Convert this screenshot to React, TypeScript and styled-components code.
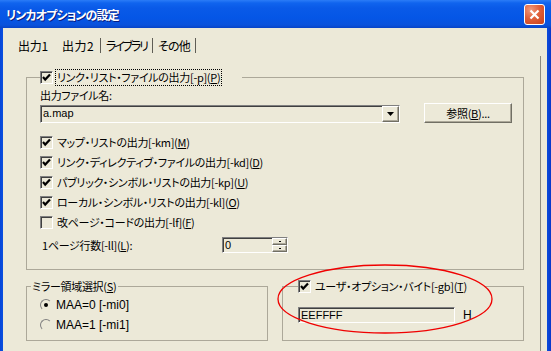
import React from "react";
import styled, { createGlobalStyle } from "styled-components";

const GlobalStyle = createGlobalStyle`
  html, body {
    margin: 0;
    padding: 0;
    background: #ece9d8;
  }
  body {
    font-family: "Noto Sans CJK JP", "Noto Sans", sans-serif;
    font-size: 11px;
    letter-spacing: -0.3px;
    color: #000;
    font-feature-settings: "palt";
  }
`;

const Window = styled.div`
  position: relative;
  width: 551px;
  height: 351px;
  overflow: hidden;
  display: flex;
  flex-direction: column;
  background: linear-gradient(90deg, #0846d8 0px, #0a4fe0 3px, #0a48d9 548px, #0a36c8 551px);
`;

const TitleBar = styled.div`
  height: 28px;
  flex: none;
  display: flex;
  align-items: center;
  justify-content: space-between;
  padding: 0 6px 0 6px;
  background: linear-gradient(
    #2b7cf7 0px,
    #1064ee 3px,
    #0a5ae8 8px,
    #0556e6 18px,
    #0a52dc 25px,
    #0844c6 28px
  );
`;

const Title = styled.div`
  color: #fff;
  font-weight: bold;
  font-size: 12px;
  letter-spacing: -0.9px;
  line-height: 16px;
  text-shadow: 1px 1px 0 #0a1d80;
  margin-top: 1px;
`;

const CloseButton = styled.div`
  width: 21px;
  height: 21px;
  box-sizing: border-box;
  border: 1px solid #fff;
  border-radius: 3px;
  background: radial-gradient(circle at 30% 25%, #f09a7c 0%, #e0603a 45%, #c8401a 100%);
  display: flex;
  align-items: center;
  justify-content: center;
  margin-top: 1px;
`;

const Body = styled.div`
  flex: 1;
  margin: 0 4px 0 3px;
  background: #ece9d8;
  display: flex;
  flex-direction: column;
`;

const TabRow = styled.div`
  height: 28px;
  box-sizing: border-box;
  padding: 10px 0 0 9px;
  display: flex;
  flex: none;
`;

const Tab = styled.div<{ $w: number; $pl: number; $ls: number; $sep?: boolean }>`
  width: ${(p) => p.$w}px;
  padding-left: ${(p) => p.$pl}px;
  box-sizing: border-box;
  height: 15px;
  line-height: 15px;
  font-size: 12px;
  letter-spacing: ${(p) => p.$ls}px;
  white-space: nowrap;
  overflow: hidden;
  border-right: ${(p) => (p.$sep ? "1px solid #5f5d55" : "none")};
`;

const Panel = styled.div`
  flex: 1;
  margin-right: 6px;
  border-right: 1px solid #8c8a7f;
  padding: 13px 16px 0 23px;
  display: flex;
  flex-direction: column;
`;

const Group = styled.fieldset<{ $pl: number; $pb: number }>`
  margin: 0;
  min-width: 0;
  border: 1px solid #aca899;
  padding: 0 0 ${(p) => p.$pb}px ${(p) => p.$pl}px;
`;

const Legend = styled.legend<{ $pr: number }>`
  padding: 0 ${(p) => p.$pr}px 0 0;
  height: 17px;
  display: flex;
  align-items: center;
  gap: 3px;
  white-space: nowrap;
`;

const LegendText = styled.span`
  padding: 0 1px;
  line-height: 15px;
`;

const FocusLabel = styled.span`
  padding: 0 1px;
  line-height: 15px;
  outline: 1px dotted #000;
  outline-offset: 0;
`;

const FieldLabel = styled.div`
  margin-top: 1px;
  height: 16px;
  line-height: 16px;
`;

const FileRow = styled.div`
  display: flex;
  align-items: flex-end;
  gap: 24px;
  height: 20px;
`;

const Sunken = styled.div`
  box-sizing: border-box;
  border-style: solid;
  border-width: 1px;
  border-color: #808080 #fff #fff #808080;
  box-shadow: inset 1px 1px 0 #404040;
`;

const Combo = styled(Sunken)`
  width: 360px;
  height: 18px;
  display: flex;
`;

const FieldText = styled.div`
  flex: 1;
  padding-left: 2px;
  line-height: 15px;
  letter-spacing: 0;
  font-family: "Liberation Sans", "Noto Sans CJK JP", sans-serif;
  font-size: 11px;
`;

const Raised = styled.div`
  box-sizing: border-box;
  border-style: solid;
  border-width: 1px;
  border-color: #fff #716f64 #716f64 #fff;
  box-shadow: inset -1px -1px 0 #aca899;
  background: #ece9d8;
  display: flex;
  align-items: center;
  justify-content: center;
`;

const DropButton = styled(Raised)`
  width: 17px;
  height: 16px;
`;

const PushButton = styled(Raised)`
  width: 88px;
  height: 20px;
  line-height: 16px;
`;

const CheckList = styled.div`
  margin-top: 9px;
  display: flex;
  flex-direction: column;
`;

const CheckRow = styled.div`
  height: 20px;
  display: flex;
  align-items: center;
  gap: 4px;
  white-space: nowrap;
`;

const Box = styled(Sunken)`
  width: 13px;
  height: 13px;
  flex: none;
  display: flex;
  align-items: center;
  justify-content: center;
`;

const SpinRow = styled.div`
  margin-top: 5px;
  height: 16px;
  display: flex;
  align-items: center;
  padding-left: 2px;
`;

const SpinLabel = styled.div`
  width: 180px;
  line-height: 16px;
`;

const Spin = styled(Sunken)`
  width: 66px;
  height: 16px;
  display: flex;
`;

const SpinButtons = styled.div`
  width: 15px;
  display: flex;
  flex-direction: column;
`;

const SpinHalf = styled(Raised)`
  flex: 1;
`;

const Dot = styled.div`
  width: 2px;
  height: 1px;
  background: #000;
`;

const BottomRow = styled.div`
  margin-top: 8px;
  display: flex;
  gap: 14px;
`;

const MirrorGroup = styled(Group)`
  width: 242px;
  flex: none;
  box-sizing: border-box;
`;

const ByteGroup = styled(Group)`
  flex: 1;
`;

const RadioList = styled.div`
  padding-left: 9px;
  display: flex;
  flex-direction: column;
`;

const Radio = styled.div<{ $on?: boolean }>`
  width: 12px;
  height: 12px;
  box-sizing: border-box;
  border-radius: 50%;
  border: 1px solid;
  border-color: #808080 #ece9d8 #ece9d8 #808080;
  flex: none;
  display: flex;
  align-items: center;
  justify-content: center;
  &::after {
    content: "";
    width: 4px;
    height: 4px;
    border-radius: 50%;
    background: ${(p) => (p.$on ? "#000" : "transparent")};
  }
`;

const AsciiText = styled.span`
  font-family: "Liberation Sans", sans-serif;
  font-size: 12px;
  letter-spacing: 0;
`;

const ByteRow = styled.div`
  margin-top: 12px;
  display: flex;
  align-items: center;
  gap: 8px;
`;

const ByteEdit = styled(Sunken)`
  width: 157px;
  height: 16px;
  display: flex;
  align-items: center;
`;

const Overlay = styled.svg`
  position: absolute;
  left: 0;
  top: 0;
  pointer-events: none;
`;

function Check({ on }: { on?: boolean }) {
  return (
    <Box>
      {on && (
        <svg width="9" height="9" viewBox="0 0 9 9">
          <path d="M1 4 L3.2 6.6 L8 1.4" fill="none" stroke="#000" strokeWidth="2.2" />
        </svg>
      )}
    </Box>
  );
}

const checks = [
  { on: true, text: "マップ・リストの出力[-km](", key: "M" },
  { on: true, text: "リンク・ディレクティブ・ファイルの出力[-kd](", key: "D" },
  { on: true, text: "パブリック・シンボル・リストの出力[-kp](", key: "U" },
  { on: true, text: "ローカル・シンボル・リストの出力[-kl](", key: "O" },
  { on: false, text: "改ページ・コードの出力[-lf](", key: "F" },
];

export default function App() {
  return (
    <>
      <GlobalStyle />
      <Window>
        <TitleBar>
          <Title>リンカオプションの設定</Title>
          <CloseButton>
            <svg width="11" height="11" viewBox="0 0 11 11">
              <path d="M1.5 1.5 L9.5 9.5 M9.5 1.5 L1.5 9.5" stroke="#fff" strokeWidth="2.2" />
            </svg>
          </CloseButton>
        </TitleBar>
        <Body>
          <TabRow>
            <Tab $w={45} $pl={6} $ls={-0.3}>出力1</Tab>
            <Tab $w={44} $pl={5} $ls={0.5} $sep>出力2</Tab>
            <Tab $w={52} $pl={5} $ls={-2.2} $sep>ライブラリ</Tab>
            <Tab $w={43} $pl={5} $ls={-0.8} $sep>その他</Tab>
          </TabRow>
          <Panel>
            <Group $pl={13} $pb={16}>
              <Legend $pr={21}>
                <Check on />
                <FocusLabel>
                  リンク・リスト・ファイルの出力[-p](<u>P</u>)
                </FocusLabel>
              </Legend>
              <FieldLabel>出力ファイル名:</FieldLabel>
              <FileRow>
                <Combo>
                  <FieldText>a.map</FieldText>
                  <DropButton>
                    <svg width="7" height="4" viewBox="0 0 7 4">
                      <path d="M0 0 H7 L3.5 4 Z" fill="#000" />
                    </svg>
                  </DropButton>
                </Combo>
                <PushButton>
                  参照(<u>B</u>)...
                </PushButton>
              </FileRow>
              <CheckList>
                {checks.map((c) => (
                  <CheckRow key={c.key}>
                    <Check on={c.on} />
                    <span>
                      {c.text}
                      <u>{c.key}</u>)
                    </span>
                  </CheckRow>
                ))}
              </CheckList>
              <SpinRow>
                <SpinLabel>
                  1ページ行数[-ll](<u>L</u>):
                </SpinLabel>
                <Spin>
                  <FieldText>0</FieldText>
                  <SpinButtons>
                    <SpinHalf>
                      <Dot />
                    </SpinHalf>
                    <SpinHalf>
                      <Dot />
                    </SpinHalf>
                  </SpinButtons>
                </Spin>
              </SpinRow>
            </Group>
            <BottomRow>
              <MirrorGroup $pl={4} $pb={5}>
                <Legend $pr={1}>
                  <LegendText>
                    ミラー領域選択(<u>S</u>)
                  </LegendText>
                </Legend>
                <RadioList>
                  <CheckRow>
                    <Radio $on />
                    <AsciiText>MAA=0 [-mi0]</AsciiText>
                  </CheckRow>
                  <CheckRow>
                    <Radio />
                    <AsciiText>MAA=1 [-mi1]</AsciiText>
                  </CheckRow>
                </RadioList>
              </MirrorGroup>
              <ByteGroup $pl={15} $pb={17}>
                <Legend $pr={16}>
                  <Check on />
                  <LegendText>
                    ユーザ・オプション・バイト[-gb](<u>T</u>)
                  </LegendText>
                </Legend>
                <ByteRow>
                  <ByteEdit>
                    <FieldText>EEFFFF</FieldText>
                  </ByteEdit>
                  <AsciiText>H</AsciiText>
                </ByteRow>
              </ByteGroup>
            </BottomRow>
          </Panel>
        </Body>
        <Overlay width="551" height="351">
          <ellipse cx="385" cy="299" rx="107" ry="34" fill="none" stroke="#f00000" strokeWidth="1.3" />
        </Overlay>
      </Window>
    </>
  );
}
